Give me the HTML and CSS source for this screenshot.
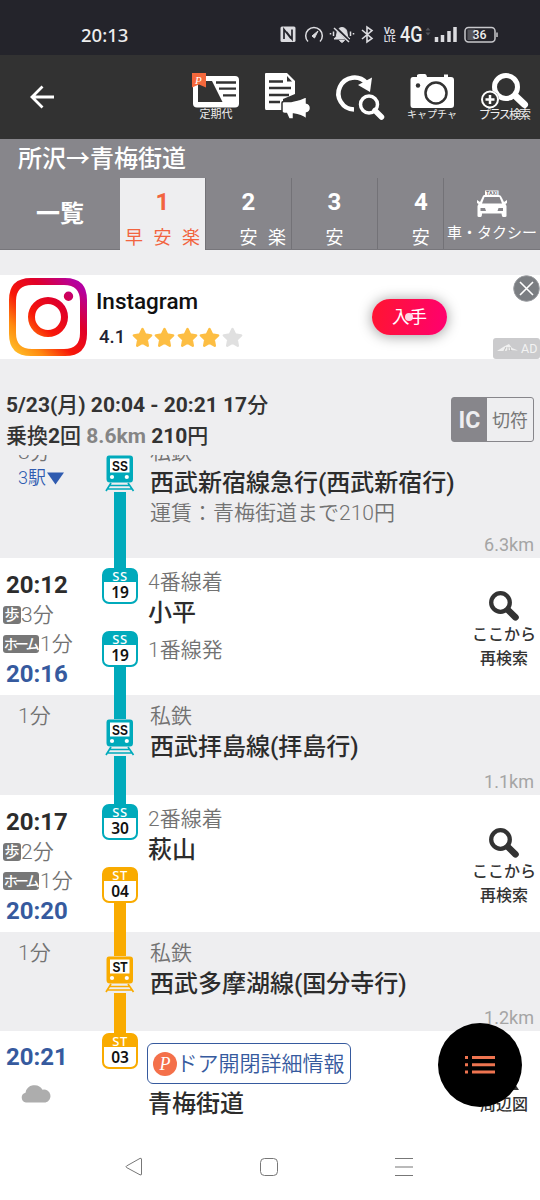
FILE: index.html
```html
<!DOCTYPE html>
<html lang="ja">
<head>
<meta charset="utf-8">
<title>所沢→青梅街道</title>
<link rel="stylesheet" href="styles.css">
</head>
<body>
<svg class="defs" width="0" height="0">
  <symbol id="train" viewBox="0 0 32 37">
    <path class="edge" d="M5 0H27Q30 0 30 3V25Q30 27 28 28L32 37H0L4 28Q2 27 2 25V3Q2 0 5 0Z"/>
    <path d="M5 0.500H26Q29 0.500 29 3.500V24Q29 27.500 26 27.500H6Q2.500 27.500 2.500 24V3.500Q2.500 0.500 5 0.500Z" fill="currentColor"/>
    <path d="M6 3.500H25.500V17.500H6Z" fill="#fff"/>
    <circle cx="8" cy="22" r="2.100" fill="#fff"/><circle cx="22.800" cy="22" r="2.100" fill="#fff"/>
    <path d="M7 28L2 36M24 28L29.500 36M6 30.500H25M4 34H27.500" stroke="currentColor" stroke-width="1.700" fill="none"/>
  </symbol>
  <symbol id="search" viewBox="0 0 30 30">
    <circle cx="11.500" cy="11.500" r="9.300" fill="none" stroke="#333" stroke-width="4.300"/>
    <path d="M19 19L26.500 26.300" stroke="#333" stroke-width="6.600" stroke-linecap="round"/>
  </symbol>
  <symbol id="star" viewBox="0 0 20 20">
    <path d="M10 2L12.500 7.200L18.200 8L14 12L15 17.800L10 15L5 17.800L6 12L1.800 8L7.500 7.200Z" fill="currentColor" stroke="currentColor" stroke-width="2.400" stroke-linejoin="round"/>
  </symbol>
</svg>

<div class="screen">
  <div class="status">
    <span class="clock">20:13</span>
    <svg class="status-icons" width="220" height="24" viewBox="280 22 220 24">
      <rect x="280.500" y="26.500" width="15" height="15.500" rx="1.500" fill="#dcdce0"/>
      <path d="M284 39V29.500L291 38.500M292 29.500V39L286.500 32" fill="none" stroke="#24242b" stroke-width="1.700"/>
      <path d="M308 41.500A8.300 8.300 0 1 1 320 41.500" fill="none" stroke="#dcdce0" stroke-width="1.500"/>
      <path d="M312 36L318 31L314.500 38Z" fill="#dcdce0" stroke="#dcdce0"/>
      <path d="M334 39Q337 37 337 33Q337 28 342 27.500Q347 28 347 33Q347 37 350 39ZM339.500 40.500H344.500L342 42.500Z" fill="#dcdce0" stroke="#dcdce0"/>
      <path d="M335 27L350 42" stroke="#24242b" stroke-width="3"/><path d="M334 28L349 42" stroke="#dcdce0" stroke-width="1.500"/>
      <path d="M330.500 33V34.500M333.500 31.500V36M350.500 31.500V36M353.500 33V34.500" stroke="#dcdce0" stroke-width="1.500"/>
      <path d="M362 30L372 38.500L367 42V27L372 30.500L362 39" fill="none" stroke="#dcdce0" stroke-width="1.600"/>
      <text x="384" y="33.500" class="volte" textLength="11" lengthAdjust="spacingAndGlyphs">Vo</text>
      <text x="384" y="42" class="volte" textLength="11.500" lengthAdjust="spacingAndGlyphs">LTE</text>
      <text x="400" y="42" class="net" textLength="22.500" lengthAdjust="spacingAndGlyphs">4G</text>
      <path d="M425.500 30.500L428 27.500L430.500 30.500ZM425.500 32.500L428 35.500L430.500 32.500Z" fill="#55555b"/>
      <path d="M436.500 42V37M442.500 42V35M449 42V31M455 42V27" stroke="#dcdce0" stroke-width="3.500"/>
      <rect x="465" y="27.500" width="30" height="14.500" rx="3.500" fill="none" stroke="#c8c8cc" stroke-width="1.500"/>
      <path d="M467.500 29.500H475V40H467.500Z" fill="#55555b"/><path d="M497 32.500V37" stroke="#c8c8cc" stroke-width="1.500"/>
      <text x="472.500" y="39.300" class="batt" textLength="14" lengthAdjust="spacingAndGlyphs">36</text>
    </svg>
  </div>

  <div class="toolbar">
    <svg class="back" width="26" height="26" viewBox="29 84 26 26"><path d="M54 97H32M42.500 86.500L32 97L42.500 107.500" fill="none" stroke="#fff" stroke-width="2.800"/></svg>
    <div class="tools">
      <div class="tool">
        <svg viewBox="180 71 72 38"><rect x="193" y="76" width="46" height="31.500" rx="4" fill="#fff"/><path d="M198 81H212L222.500 102H198Z" fill="#323232"/><path d="M216 82.500H236M219 88.700H236M223 95.300H236" stroke="#323232" stroke-width="2.300"/><path d="M192 73H206V87.500L199 84.500L192 87.500Z" fill="#f4683c"/><text x="195" y="83.500" class="script-p">P</text></svg>
        <span>定期代</span>
      </div>
      <div class="tool">
        <svg viewBox="252 71 72 38"><path d="M266 73H287L295 81V94L283 99V110H266Q265 110 265 108V74Q265 73 266 73Z" fill="#fff"/><path d="M287 76V81.500H292Z" fill="#323232"/><path d="M269 81.500H283M269 88H291M269 95H289M269 102H280" stroke="#323232" stroke-width="2.300"/><path d="M282 103Q282 101.500 284 101.500H291Q300 100 306.500 96.500V103Q310.500 104 310.500 108Q310.500 112 306.500 113V119Q301 115 293.500 114V119H289L286.500 113.500Q282 113.500 282 111.500Z" fill="#fff" stroke="#323232" stroke-width="1.500"/></svg>
      </div>
      <div class="tool">
        <svg viewBox="324 71 72 38"><path d="M354 109.500A16 16 0 1 1 366.500 83" fill="none" stroke="#fff" stroke-width="4.500"/><path d="M358 85L372 77.500L370 92Z" fill="#fff"/><circle cx="369" cy="104.500" r="8.500" fill="#323232" stroke="#fff" stroke-width="3.500"/><path d="M375 110.500L381.500 117" stroke="#fff" stroke-width="5.500" stroke-linecap="round"/></svg>
      </div>
      <div class="tool">
        <svg viewBox="396 71 72 38"><path d="M413 77H417V75Q418 74 420 74H425Q426.500 74 427 77H444V74.500H448V77H451Q454 77 454 80V105Q454 108 451 108H413Q410.500 108 410.500 105V80Q410.500 77 413 77Z" fill="#fff"/><circle cx="418" cy="85.500" r="2.200" fill="#323232"/><circle cx="436" cy="93" r="10.500" fill="none" stroke="#323232" stroke-width="2.500"/></svg>
        <span class="narrow">キャプチャ</span>
      </div>
      <div class="tool">
        <svg viewBox="468 71 72 38"><circle cx="506" cy="87" r="11.500" fill="none" stroke="#fff" stroke-width="5"/><path d="M516 96.500L524.500 104.500" stroke="#fff" stroke-width="7" stroke-linecap="round"/><circle cx="490" cy="99.500" r="9" fill="#323232"/><circle cx="490" cy="99.500" r="8" fill="none" stroke="#fff" stroke-width="2"/><path d="M485.500 99.500H494.500M490 95V104" stroke="#fff" stroke-width="2.500"/></svg>
        <span class="plus-label">プラス検索</span>
      </div>
    </div>
  </div>

  <div class="header">
    <div class="route">所沢→青梅街道</div>
    <div class="tabs">
      <div class="tab all">一覧</div>
      <div class="tab active"><b>1</b><div class="marks"><i>早</i><i>安</i><i>楽</i></div></div>
      <div class="tab"><b>2</b><div class="marks"><i></i><i>安</i><i>楽</i></div></div>
      <div class="tab"><b>3</b><div class="marks"><i></i><i>安</i><i></i></div></div>
      <div class="tab cut"><b>4</b><div class="marks"><i></i><i>安</i><i></i></div></div>
      <div class="tab taxi">
        <svg width="32" height="28" viewBox="476 190 32 28"><path d="M485 190.500H498.500V195H485Z" fill="#fff"/><text x="486" y="194.600" class="taxi-text" textLength="11.500" lengthAdjust="spacingAndGlyphs">TAXI</text><path fill-rule="evenodd" d="M484 195H499Q501 195 502 198L504 202L507 200V203L505.500 204L506.500 206V216Q506.500 217 505 217H503Q502 217 501.500 213.500H482Q482 217 480.500 217H479Q477.500 217 477.500 216V206L478.500 204L477 203V200L480 202L482 198Q483 195 484 195ZM484.500 197L482 203.500H502L499.500 197ZM480.500 208V211H486L485 208ZM498.500 208L497.500 211H503V208Z" fill="#fff"/></svg>
        <span>車・タクシー</span>
      </div>
    </div>
  </div>

  <div class="ad">
    <svg class="insta" width="78" height="78" viewBox="0 0 78 78">
      <defs><linearGradient id="ig" x1="0" y1="1" x2="1" y2="0"><stop offset="0" stop-color="#ffd030"/><stop offset=".22" stop-color="#ff8a10"/><stop offset=".42" stop-color="#f81808"/><stop offset=".65" stop-color="#e00028"/><stop offset=".9" stop-color="#b500a0"/></linearGradient></defs>
      <path fill-rule="evenodd" fill="url(#ig)" d="M22 0H56Q78 0 78 22V56Q78 78 56 78H22Q0 78 0 56V22Q0 0 22 0ZM23 7Q7 7 7 23V55Q7 71 23 71H55Q71 71 71 55V23Q71 7 55 7ZM39 19A20 20 0 1 1 39 59A20 20 0 1 1 39 19ZM39 26A13 13 0 1 0 39 52A13 13 0 1 0 39 26ZM59.500 13.500A4.700 4.700 0 1 1 59.500 22.900A4.700 4.700 0 1 1 59.500 13.500Z"/>
    </svg>
    <div class="ad-info">
      <div class="ad-name">Instagram</div>
      <div class="rating"><span>4.1</span><svg><use href="#star"/></svg><svg><use href="#star"/></svg><svg><use href="#star"/></svg><svg><use href="#star"/></svg><svg class="off"><use href="#star"/></svg></div>
    </div>
    <div class="get">入手<i class="dot"></i></div>
    <svg class="close" width="27" height="27" viewBox="0 0 27 27"><circle cx="13.500" cy="13.500" r="12.800" fill="#7b7e82" stroke="#9a9ca0"/><path d="M7 7L20 20M20 7L7 20" stroke="#fff" stroke-width="1.600"/></svg>
    <div class="ad-tag"><svg width="21" height="9" viewBox="0 0 21 9"><path d="M0 7L7 2.500L12 0L15 4L21 6.500L13 6L8 7Z" fill="#f0f0f0"/><path d="M7 7L9 3M11 7V3M14 7L13 3" stroke="#bbb" fill="none"/></svg>AD</div>
  </div>

  <div class="summary">
    <div class="sum-text">
      <div>5/23(<i>月</i>) 20:04 - 20:21 17<i>分</i></div>
      <div><i>乗換</i>2<i>回</i> <span>8.6km</span> 210<i>円</i></div>
    </div>
    <div class="fare"><b>IC</b><span>切符</span></div>
  </div>

  <div class="row leg first">
    <div class="times"><div>8分</div><div class="stops">3駅<svg width="17" height="13" viewBox="0 0 17 13"><path d="M0 0.500H17L8.500 12.500Z" fill="#2f5bb0"/></svg></div></div>
    <div class="rail ss"><i class="bar"></i><div class="train"><svg><use href="#train"/></svg><b>SS</b></div><i class="bar grow"></i></div>
    <div class="info"><div class="sub">私鉄</div><div class="name">西武新宿線急行(西武新宿行)</div><div class="sub">運賃：青梅街道まで210円</div></div>
    <div class="km">6.3km</div>
  </div>

  <div class="row stop">
    <div class="times"><div class="t">20:12</div><div class="walk"><em>歩</em>3分</div><div class="walk home"><em>ホーム</em>1分</div><div class="t blue">20:16</div></div>
    <div class="rail ss"><i class="bar"></i><div class="badge"><span>SS</span><b>19</b></div><div class="badge second"><span>SS</span><b>19</b></div><i class="bar grow"></i></div>
    <div class="info"><div class="sub">4番線着</div><div class="name">小平</div><div class="sub dep">1番線発</div></div>
    <div class="again"><svg><use href="#search"/></svg><div>ここから</div><div>再検索</div></div>
  </div>

  <div class="row leg">
    <div class="times"><div>1分</div></div>
    <div class="rail ss"><i class="bar"></i><div class="train"><svg><use href="#train"/></svg><b>SS</b></div><i class="bar grow"></i></div>
    <div class="info"><div class="sub">私鉄</div><div class="name">西武拝島線(拝島行)</div></div>
    <div class="km">1.1km</div>
  </div>

  <div class="row stop second-stop">
    <div class="times"><div class="t">20:17</div><div class="walk"><em>歩</em>2分</div><div class="walk home"><em>ホーム</em>1分</div><div class="t blue">20:20</div></div>
    <div class="rail st"><i class="bar ss"></i><div class="badge ss"><span>SS</span><b>30</b></div><div class="badge second"><span>ST</span><b>04</b></div><i class="bar grow"></i></div>
    <div class="info"><div class="sub">2番線着</div><div class="name">萩山</div></div>
    <div class="again"><svg><use href="#search"/></svg><div>ここから</div><div>再検索</div></div>
  </div>

  <div class="row leg short">
    <div class="times"><div>1分</div></div>
    <div class="rail st"><i class="bar"></i><div class="train"><svg><use href="#train"/></svg><b>ST</b></div><i class="bar grow"></i></div>
    <div class="info"><div class="sub">私鉄</div><div class="name">西武多摩湖線(国分寺行)</div></div>
    <div class="km">1.2km</div>
  </div>

  <div class="row last">
    <div class="times"><div class="t blue">20:21</div><svg class="cloud" width="31" height="19" viewBox="0 0 31 19"><path d="M5 18.500A5 5 0 0 1 4.500 8.700A9.200 9.200 0 0 1 21.500 5.800A6.400 6.400 0 0 1 24.500 18.500Z" fill="#adadad"/></svg></div>
    <div class="rail st"><i class="bar"></i><div class="badge"><span>ST</span><b>03</b></div></div>
    <div class="info"><div class="door"><svg width="24" height="24" viewBox="0 0 24 24"><circle cx="12" cy="12" r="12" fill="#f4704a"/><text x="6.500" y="18" class="script-p big">P</text></svg>ドア開閉詳細情報</div><div class="name">青梅街道</div></div>
    <div class="area"><svg width="30" height="24" viewBox="0 0 30 24"><path d="M13 0L27 21H0Z" fill="#333"/></svg><div>周辺図</div></div>
  </div>

  <div class="nav">
    <svg viewBox="0 0 20 20"><path d="M17.500 2V17Q17.500 18.500 16 17.800L2.500 10.500Q1.500 9.700 2.500 9L16 1.400Q17.500 1 17.500 2Z" fill="none" stroke="#777"/></svg>
    <svg viewBox="0 0 20 20"><rect x="1.500" y="1.500" width="17" height="17" rx="4" fill="none" stroke="#777"/></svg>
    <svg viewBox="0 0 20 20"><path d="M1 1.500H19M1 10H19M1 18.500H19" stroke="#777" stroke-width="1.200"/></svg>
  </div>

  <div class="fab"><svg width="30" height="18" viewBox="0 0 30 18"><path d="M0 1.500H3M7 1.500H30M0 8.700H3M7 8.700H30M0 16H3M7 16H30" stroke="#ee7450" stroke-width="2.900"/></svg></div>
</div>
</body>
</html>
```

FILE: styles.css
```css
* { box-sizing: border-box; }
body { margin: 0; font-family: Roboto, "Noto Sans CJK JP", sans-serif; color: #333; }
i, em { font-style: normal; }
.defs { position: absolute; }
svg { display: block; flex: none; }
.screen { position: relative; width: 540px; height: 1200px; overflow: hidden; background: #eeeef0; display: flex; flex-direction: column; white-space: nowrap; }
.screen > * { flex: none; }

.status { height: 55px; background: #24242b; color: #eee; display: flex; align-items: flex-start; justify-content: space-between; padding: 22px 40px 0 81px; }
.clock { font: 500 18.5px/25px "Noto Sans", sans-serif; }
.volte { font: 700 9.5px Roboto, sans-serif; fill: #dcdce0; }
.net { font: 500 21.5px Roboto, sans-serif; fill: #eee; }
.batt { font: 500 12.5px Roboto, sans-serif; fill: #eee; }

.toolbar { height: 84px; background: #323232; display: flex; align-items: center; justify-content: space-between; padding-left: 29px; }
.tools { display: flex; height: 84px; padding-top: 16px; }
.tool { width: 72px; display: flex; flex-direction: column; align-items: center; color: #eee; font-size: 11px; line-height: 12px; }
.tool svg { width: 72px; height: 38px; overflow: visible; }
.tool .narrow { font-size: 10px; }
.tool .plus-label { font-size: 12px; letter-spacing: -1.9px; }
.script-p { font: italic 11px "Liberation Serif", serif; fill: #fff; }
.script-p.big { font-size: 18px; }

.header { height: 111px; background: #87868b; color: #fff; border-bottom: 1px solid #77767b; }
.route { height: 39px; padding-left: 18px; font-size: 24px; line-height: 41px; font-weight: 500; }
.tabs { display: flex; height: 71px; }
.tab { width: 86px; display: flex; flex-direction: column; align-items: center; border-right: 1px solid #737277; }
.tab b { font-size: 24px; line-height: 49px; height: 46px; }
.tab.all { width: 120px; font-size: 24px; font-weight: 700; line-height: 73px; border: 0; }
.tab.active { background: #eeeef0; color: #f2643f; height: 72px; }
.tab.cut { width: 66px; align-items: flex-start; overflow: hidden; }
.tab.cut b { width: 86px; text-align: center; }
.marks { display: flex; }
.marks i { width: 28.5px; text-align: center; font-size: 18px; line-height: 28px; }
.tab.taxi { width: 96px; border: 0; padding-top: 12px; font-size: 15px; line-height: 31px; }
.taxi-text { font: 700 5px Roboto, sans-serif; fill: #77767b; }

.screen > .ad { margin-top: 25px; }
.ad { position: relative; height: 84px; background: #fff; display: flex; padding: 3px 0 0 9px; }
.ad-info { width: 293px; padding-left: 9px; color: #111; }
.ad-name { font-size: 22.5px; line-height: 46px; font-weight: 500; height: 48px; }
.rating { display: flex; align-items: center; padding-left: 3px; height: 22px; font-size: 18.5px; line-height: 24px; font-weight: 500; color: #223; }
.rating span { width: 32.5px; }
.rating svg { width: 21px; height: 21px; margin-right: 1.5px; color: #fdbe43; }
.rating .off { color: #e0e0e0; }
.get { position: relative; width: 75px; height: 36px; margin: 21px 0 0 -8px; border-radius: 18px; background: linear-gradient(100deg, #ff1530, #ff0070); color: #fff; text-align: center; font-size: 17.5px; line-height: 36px; box-shadow: 0 1px 14px rgba(0,0,0,.4); }
.dot { position: absolute; left: 33px; top: 14px; width: 8px; height: 8px; border-radius: 50%; background: #ffd5e5; }
.close { position: absolute; right: 0; top: 0; }
.ad-tag { position: absolute; right: 0; bottom: 0; width: 47px; height: 21px; border-radius: 3px; background: #cbcbcd; color: #f3f3f3; font-size: 12.5px; display: flex; align-items: center; gap: 3px; padding-left: 4px; }

.summary { height: 96px; background: #eeeef0; display: flex; justify-content: space-between; padding: 31px 6px 0 6px; position: relative; z-index: 1; }
.sum-text { font-size: 21px; line-height: 31px; font-weight: 700; }
.sum-text i { font-weight: 500; }
.sum-text span { color: #858585; }
.fare { display: flex; width: 83px; height: 45px; margin-top: 7px; border: 1.5px solid #87868b; border-radius: 3px; color: #777; font-size: 18px; line-height: 45px; }
.fare b { width: 35px; background: #87868b; color: #eeeef0; text-align: center; font-size: 23px; }
.fare span { flex: 1; text-align: center; }

.row { display: grid; grid-template-columns: 102px 36px 1fr auto; overflow: hidden; background: #fff; }
.row.leg { height: 100px; background: #eeeef0; }
.row.leg.short { height: 99px; }
.row.leg.first { height: 103px; }
.row.first > * { margin-top: -24px; }
.sub, .leg .times, .walk { color: #727272; font-size: 21px; line-height: 30px; font-weight: 350; }
.row.stop { height: 137px; }
.name { font-size: 24px; line-height: 32px; font-weight: 500; color: #2c2c2c; }
.leg .times { padding: 6px 0 0 18px; line-height: 31px; }
.stops { display: flex; align-items: center; gap: 1px; color: #2f5bb0; font-size: 18px; line-height: 28px; margin-top: -4px; height: 28px; }
.leg .info { padding: 6px 0 0 12px; }
.leg .name + .sub { line-height: 28px; }
.km { align-self: end; padding-right: 6px; font-size: 18px; line-height: 26px; color: #a5a5a5; }

.rail { display: flex; flex-direction: column; align-items: center; }
.ss { color: #00aabb; }
.st { color: #f9ab00; }
.bar { width: 12px; height: 10px; background: currentColor; }
.second-stop .bar { height: 9px; }
.leg .bar { height: 24px; }
.rail .bar.grow { flex: 1; height: auto; }
.train { position: relative; width: 32px; height: 36px; }
.train svg { width: 32px; height: 37px; }
.edge { fill: #eeeef0; }
.train b { position: absolute; left: 4px; top: 3px; width: 24px; color: #111; font: 700 15px/16px "Liberation Sans", sans-serif; text-align: center; transform: scaleX(.79); }
.badge { width: 36px; height: 36px; border: 2.5px solid currentColor; border-radius: 7px; background: linear-gradient(currentColor 12.5px, #fff 12.5px); text-align: center; font-family: "Noto Sans", sans-serif; }
.badge.second { margin-top: 27px; }
.badge span { display: block; color: #fff; font-size: 13px; line-height: 13px; height: 12.5px; font-weight: 500; letter-spacing: .5px; }
.badge b { display: block; color: #111; font-size: 15.5px; line-height: 18px; font-weight: 600; }

.stop .times { padding: 12px 0 0; }
.t { font-size: 24px; line-height: 30px; font-weight: 700; color: #2c2c2c; padding-left: 6px; }
.t.blue { color: #365a9e; line-height: 33px; }
.walk { display: flex; align-items: center; padding-left: 3px; }
.walk.home { line-height: 28px; }
.walk em { width: 18px; height: 18px; line-height: 18px; border-radius: 3px; background: #777; color: #fff; font-size: 15px; font-weight: 500; text-align: center; }
.walk.home em { width: 36px; font-size: 14px; letter-spacing: -2.8px; padding-right: 1.5px; margin-right: 1px; }
.stop .info { padding: 9px 0 0 10px; }
.dep { margin-top: 6px; }
.again { width: 64px; margin-right: 4px; padding-top: 33px; text-align: center; font-size: 16px; line-height: 24px; font-weight: 500; display: flex; flex-direction: column; align-items: center; }
.again svg { width: 30px; height: 30px; margin-bottom: 2px; }

.row.last { height: 102px; }
.last .bar { height: 2px; }
.last .times { padding-top: 10px; }
.cloud { margin: 10px 0 0 21px; }
.last .info { padding: 12px 0 0 9px; }
.door { width: 204px; height: 41px; border: 1.5px solid #365a9e; border-radius: 6px; color: #365a9e; font-size: 21px; line-height: 38px; display: flex; align-items: center; padding-left: 4.5px; font-weight: 350; }
.last .name { padding: 4px 0 0 1px; }
.area { width: 48px; margin-right: 12px; padding-top: 38px; font-size: 16px; line-height: 24px; font-weight: 500; }
.area svg { margin: 0 0 0 12px; }

.nav { height: 67px; background: #fff; display: flex; justify-content: space-between; padding: 24px 126px 0 124px; }
.nav svg { width: 20px; height: 20px; }
.fab { position: absolute; left: 438px; top: 1023px; width: 84px; height: 84px; border-radius: 50%; background: #000; display: flex; align-items: center; justify-content: center; }
```
